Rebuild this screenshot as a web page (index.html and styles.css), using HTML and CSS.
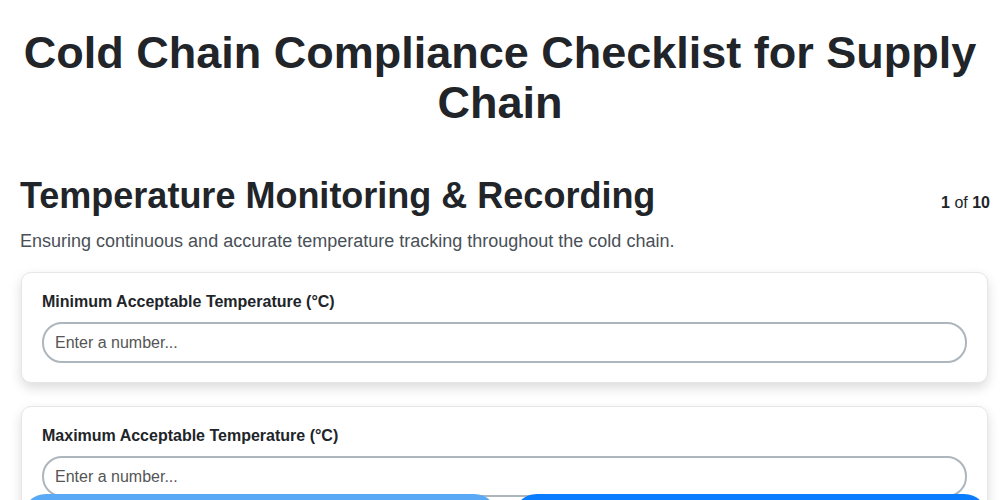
FILE: index.html
```html
<!DOCTYPE html>
<html lang="en">
<head>
    <meta charset="UTF-8">
    <meta name="viewport" content="width=device-width, initial-scale=1.0">
    <title>Cold Chain Compliance Checklist</title>
    <link rel="stylesheet" href="styles.css">
</head>
<body>
    <h1>Cold Chain Compliance Checklist for Supply Chain</h1>

    <div class="section">
        <div class="section-head">
            <h2>Temperature Monitoring &amp; Recording</h2>
            <span class="counter"><b>1</b> of <b>10</b></span>
        </div>
        <p class="section-desc">Ensuring continuous and accurate temperature tracking throughout the cold chain.</p>

        <div class="question-card">
            <label for="min-temp">Minimum Acceptable Temperature (°C)</label>
            <input type="number" id="min-temp" placeholder="Enter a number...">
        </div>

        <div class="question-card">
            <label for="max-temp">Maximum Acceptable Temperature (°C)</label>
            <input type="number" id="max-temp" placeholder="Enter a number...">
        </div>
    </div>

    <div class="nav-buttons">
        <button class="prev">Previous</button>
        <button class="next">Next</button>
    </div>
</body>
</html>
```

FILE: styles.css
```css
body {
    font-family: "Liberation Sans", Arial, sans-serif;
    background-color: #fff;
    color: #212529;
    margin: 0;
    padding: 0 10px 0 20px;
}
h1 {
    font-size: 45px;
    line-height: 50px;
    text-align: center;
    margin: 28px 0 0;
    padding: 0 10px 0 0;
}
.section {
    margin-top: 47px;
}
.section-head {
    display: flex;
    justify-content: space-between;
    align-items: baseline;
}
h2 {
    font-size: 36px;
    margin: 0;
}
.counter {
    font-size: 16px;
}
.section-desc {
    font-size: 18px;
    color: #495057;
    margin: 14px 0 20px;
}
.question-card {
    background-color: #fff;
    border: 1px solid #e6e6ea;
    border-radius: 10px;
    box-shadow: 0 5px 12px rgba(0, 0, 0, 0.14);
    padding: 20px 20px 19px;
    margin: 0 2px 23px 1px;
}
.question-card label {
    display: block;
    font-size: 16px;
    font-weight: bold;
    margin-bottom: 11px;
}
.question-card input {
    display: block;
    box-sizing: border-box;
    width: 100%;
    height: 41px;
    font-family: inherit;
    font-size: 16px;
    padding: 0 11px;
    border: 2px solid #adb5bd;
    border-radius: 20px;
}
.question-card input::placeholder {
    color: #555;
}
.nav-buttons {
    position: fixed;
    left: 22px;
    right: 12px;
    bottom: -54px;
    display: flex;
    gap: 15px;
}
.nav-buttons button {
    flex: 1;
    height: 60px;
    padding-top: 16px;
    border: none;
    border-radius: 24px;
    color: #fff;
    font-size: 17px;
    font-weight: bold;
}
.prev {
    background-color: #5aa9f7;
}
.next {
    background-color: #0a7cff;
}
```
